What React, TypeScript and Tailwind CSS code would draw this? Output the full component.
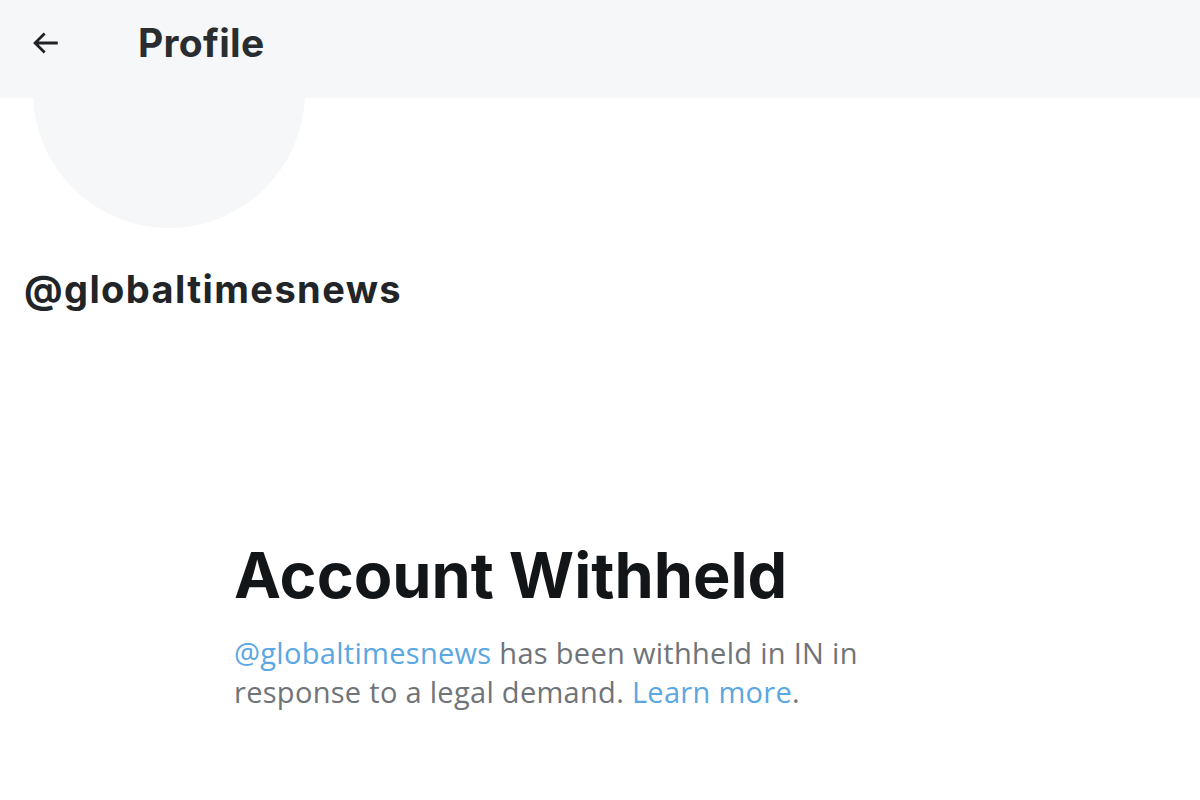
import React from "react";

function BackArrow() {
  return (
    <svg viewBox="0 0 24 24" className="w-[34px] h-[34px]" fill="#1f2326">
      <path d="M7.414 13l5.043 5.04-1.414 1.42L3.586 12l7.457-7.46 1.414 1.42L7.414 11H21v2H7.414z" />
    </svg>
  );
}

export default function App() {
  return (
    <div className="w-[1200px] h-[800px] bg-white overflow-hidden font-['Inter',sans-serif]">
      <div className="relative z-10 h-[98px] bg-[#f5f7f8]/95 flex items-center pb-[12px]">
        <div className="pl-[28px] w-[138px]">
          <BackArrow />
        </div>
        <h1 className="text-[39px] font-bold text-[#2a2d30] tracking-[0.3px]">Profile</h1>
      </div>
      <div className="ml-[33px] -mt-[142px] w-[272px] h-[272px] rounded-full bg-[#f6f7f8]" />
      <div className="pl-[24px] mt-[33px] text-[38px] font-bold text-[#222528] tracking-[1.4px]">
        @globaltimesnews
      </div>
      <div className="pl-[234px] mt-[226px]">
        <h2 className="text-[63px] font-bold text-[#131619] tracking-[0px] leading-none">
          Account Withheld
        </h2>
        <p className="mt-[26px] w-[660px] text-[29px] leading-[39px] text-[#6f7479] font-['Open_Sans',sans-serif] tracking-[0.3px]">
          <span className="text-[#5aa7e3]">@globaltimesnews</span> has been withheld in IN in
          response to a legal demand. <span className="text-[#5aa7e3]">Learn more</span>.
        </p>
      </div>
    </div>
  );
}
